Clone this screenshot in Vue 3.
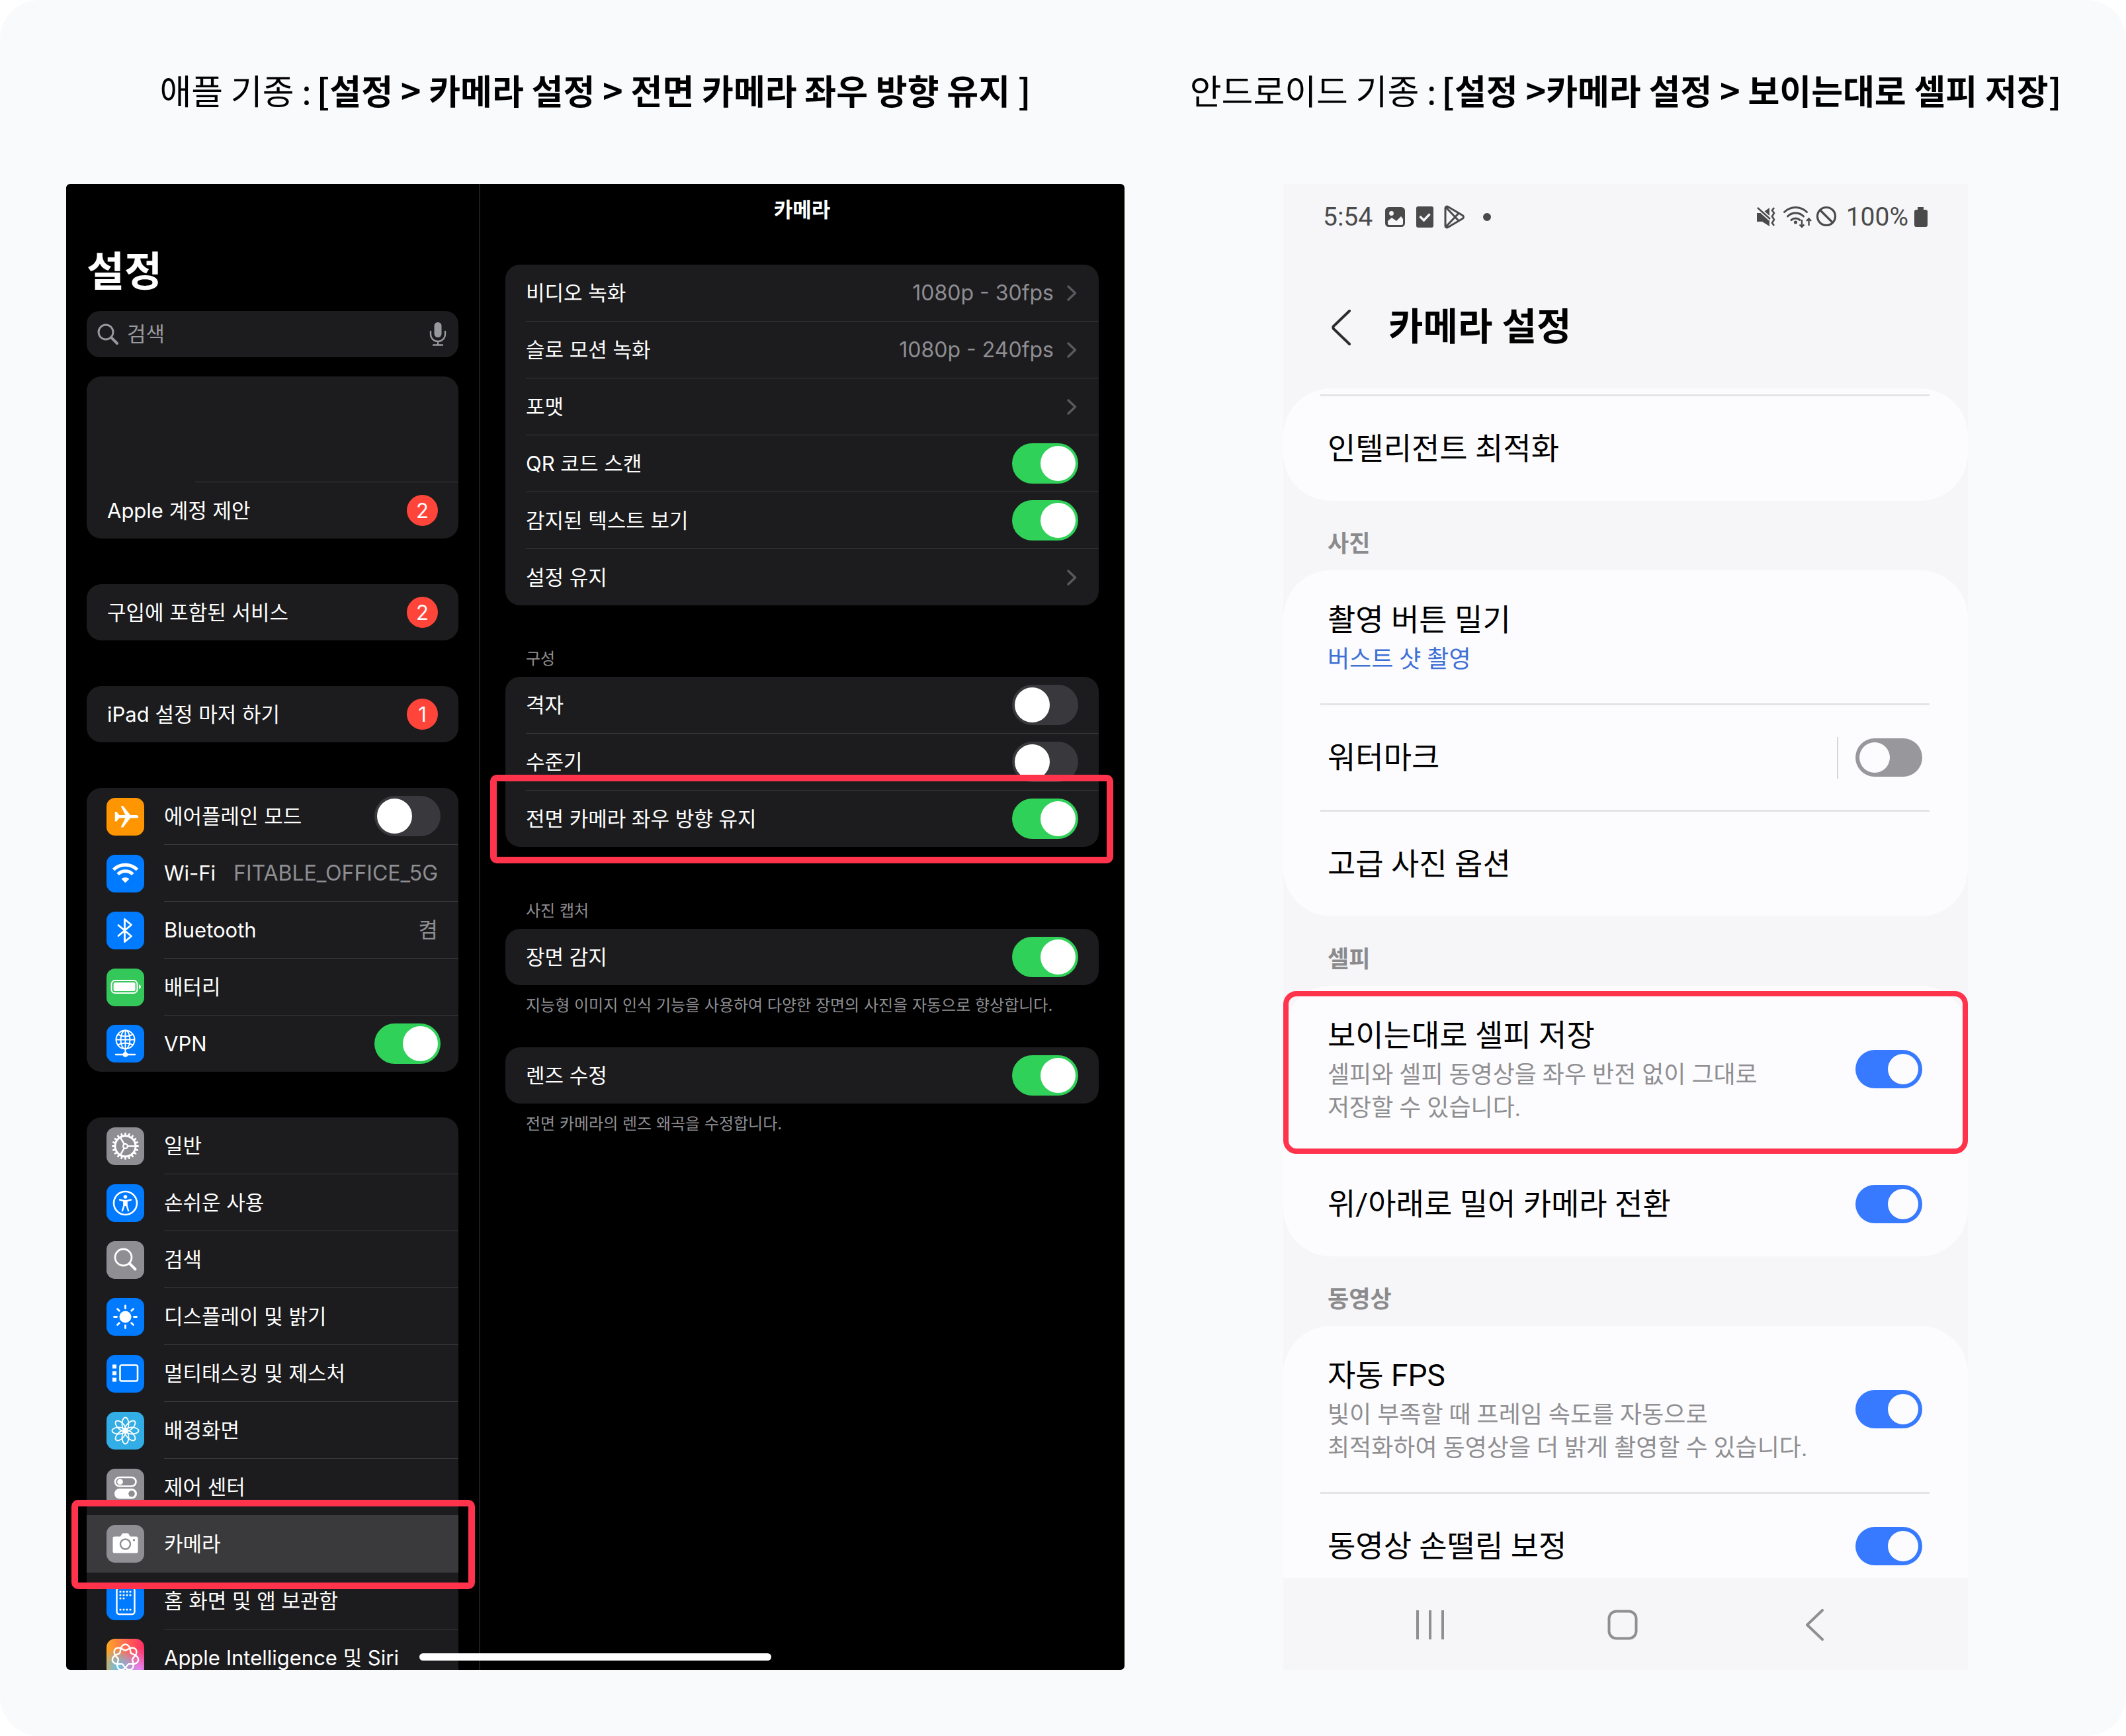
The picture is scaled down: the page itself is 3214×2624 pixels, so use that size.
<template>
  <main class="guide">
    <figure class="device">
      <figcaption class="caption">애플 기종 : <strong>[설정 &gt; 카메라 설정 &gt; 전면 카메라 좌우 방향 유지 ]</strong></figcaption>

      <div class="ipad">
        <aside class="sidebar">
          <h2 class="sidebar-title">설정</h2>

          <label class="search">
            <svg class="search-icon" viewBox="0 0 34 34" aria-hidden="true">
              <circle cx="14" cy="14" r="11" fill="none" stroke="currentColor" stroke-width="3" />
              <path d="M22 22l9 9" stroke="currentColor" stroke-width="4" stroke-linecap="round" />
            </svg>
            <input class="search-input" type="search" placeholder="검색" aria-label="검색" />
            <svg class="mic-icon" viewBox="0 0 26 36" aria-hidden="true">
              <rect x="7.5" y="0" width="11" height="23" rx="5.5" fill="currentColor" />
              <path d="M2 14v4a11 11 0 0 0 22 0v-4M13 29v5M6 34.5h14" fill="none" stroke="currentColor" stroke-width="2.4" stroke-linecap="round" />
            </svg>
          </label>

          <div class="card account">
            <div class="account-profile"></div>
            <a class="row" href="#account">
              <span>Apple 계정 제안</span>
              <span class="badge">2</span>
            </a>
          </div>

          <div v-for="notice in notices" :key="notice.label" class="card">
            <a class="row" href="#notice">
              <span>{{ notice.label }}</span>
              <span class="badge">{{ notice.count }}</span>
            </a>
          </div>

          <div class="card">
            <template v-for="item in connections" :key="item.label">
              <label v-if="item.toggle" class="row row-icon row-switch">
                <svg :class="['tile', item.tone]" viewBox="0 0 57 57" aria-hidden="true" v-html="icons[item.icon]"></svg>
                <span class="row-body">
                  <span>{{ item.label }}</span>
                  <input v-model="item.on" class="ios-switch" type="checkbox" role="switch" />
                </span>
              </label>
              <a v-else class="row row-icon" href="#connection">
                <svg :class="['tile', item.tone]" viewBox="0 0 57 57" aria-hidden="true" v-html="icons[item.icon]"></svg>
                <span class="row-body">
                  <span>{{ item.label }}</span>
                  <span class="row-value">{{ item.value }}</span>
                </span>
              </a>
            </template>
          </div>

          <nav class="card">
            <a
              v-for="item in menus"
              :key="item.label"
              :class="['row', 'row-icon', { 'row-selected': item.selected }]"
              href="#menu"
            >
              <svg :class="['tile', item.tone]" viewBox="0 0 57 57" aria-hidden="true" v-html="icons[item.icon]"></svg>
              <span class="row-body">{{ item.label }}</span>
              <span v-if="item.selected" class="marker marker-menu"></span>
            </a>
          </nav>
        </aside>

        <section class="detail">
          <h3 class="detail-title">카메라</h3>

          <div class="card">
            <template v-for="item in recording" :key="item.label">
              <label v-if="item.toggle" class="row">
                <span class="row-body">
                  <span>{{ item.label }}</span>
                  <input v-model="item.on" class="ios-switch" type="checkbox" role="switch" />
                </span>
              </label>
              <button v-else type="button" class="row">
                <span class="row-body">
                  <span>{{ item.label }}</span>
                  <span class="row-link">
                    {{ item.value }}
                    <svg class="chevron" viewBox="0 0 15 24" aria-hidden="true">
                      <path d="M2 2l10.500 10L2 22" fill="none" stroke="currentColor" stroke-width="3.400" stroke-linecap="round" stroke-linejoin="round" />
                    </svg>
                  </span>
                </span>
              </button>
            </template>
          </div>

          <h4 class="group-label">구성</h4>
          <div class="card">
            <label v-for="item in composition" :key="item.label" class="row">
              <span class="row-body">
                <span>{{ item.label }}</span>
                <input v-model="item.on" class="ios-switch" type="checkbox" role="switch" />
              </span>
              <span v-if="item.marked" class="marker marker-mirror"></span>
            </label>
          </div>

          <h4 class="group-label group-label-far">사진 캡처</h4>
          <template v-for="item in capture" :key="item.label">
            <div class="card">
              <label class="row">
                <span class="row-body">
                  <span>{{ item.label }}</span>
                  <input v-model="item.on" class="ios-switch" type="checkbox" role="switch" />
                </span>
              </label>
            </div>
            <p class="footnote">{{ item.note }}</p>
          </template>
        </section>

        <span class="home-indicator"></span>
      </div>
    </figure>

    <figure class="device">
      <figcaption class="caption">안드로이드 기종 : <strong>[설정 &gt;카메라 설정 &gt; 보이는대로 셀피 저장]</strong></figcaption>

      <div class="android">
        <header class="status">
          <span class="status-side">
            <span class="status-time">5:54</span>
            <svg class="status-icons-left" viewBox="0 0 164 36" aria-hidden="true">
              <rect x="1.5" y="4.5" width="27" height="27" rx="4" fill="#4a4a4b" stroke="#4a4a4b" stroke-width="3" />
              <circle cx="9.5" cy="12.5" r="3.4" fill="#f6f6f8" />
              <path d="M4 24l6-5 7 5 7-7 3 4v7a2 2 0 0 1-2 2H6a2 2 0 0 1-2-2z" fill="#f6f6f8" />
              <rect x="47" y="2" width="26" height="32" rx="3" fill="#4a4a4b" />
              <path d="M52.500 17l6 6 9-9.500" fill="none" stroke="#f6f6f8" stroke-width="3.4" />
              <path d="M91 4.500v27c0 2 2 3 4 2l22-13c2-1.500 2-3.500 0-5L95 2.500c-2-1-4 0-4 2zM92 3.500l19 20M92 32.500l19-20" fill="none" stroke="#4a4a4b" stroke-width="3" stroke-linejoin="round" />
              <circle cx="154" cy="18" r="6" fill="#4a4a4b" />
            </svg>
          </span>
          <span class="status-side">
            <svg class="status-icons-right" viewBox="0 0 122 36" aria-hidden="true">
              <path d="M1 12h8L20 4v28L9 25H1z" fill="#4a4a4b" />
              <path d="M1 3l20 18" stroke="#f6f6f8" stroke-width="6" />
              <path d="M2 4l19 17" stroke="#4a4a4b" stroke-width="2.4" />
              <path d="M27 4l-3 4 3 4-3 5 3 5-3 5 3 4" fill="none" stroke="#4a4a4b" stroke-width="2.600" />
              <path d="M42.500 10.500a24 24 0 0 1 34 0M47.500 17a17 17 0 0 1 24 0M53 22.500a10 10 0 0 1 13 0" fill="none" stroke="#4a4a4b" stroke-width="3" stroke-linecap="round" />
              <circle cx="59.500" cy="26" r="2.600" fill="#4a4a4b" />
              <path d="M69 22v11M65.500 29.500l3.500 3.500 3.500-3.500M79.500 31V20.500M76 24l3.500-3.500 3.500 3.500" fill="none" stroke="#4a4a4b" stroke-width="2.400" />
              <circle cx="106" cy="17" r="13.500" fill="none" stroke="#4a4a4b" stroke-width="3.200" />
              <path d="M96.500 7.500l19 19" stroke="#4a4a4b" stroke-width="3.200" />
            </svg>
            <span class="status-battery">100%</span>
            <svg class="battery-icon" viewBox="0 0 22 32" aria-hidden="true">
              <path d="M6 1h9v4h3a3 3 0 0 1 3 3v20a3 3 0 0 1-3 3H4a3 3 0 0 1-3-3V8a3 3 0 0 1 3-3h2z" fill="#4a4a4b" />
            </svg>
          </span>
        </header>

        <div class="appbar">
          <button type="button" class="back" aria-label="뒤로">
            <svg viewBox="0 0 30 56" width="30" height="56" aria-hidden="true">
              <path d="M28 3L4 26q-1.500 2 0 4l24 23" fill="none" stroke="#2b2b2d" stroke-width="4" stroke-linecap="round" />
            </svg>
          </button>
          <h2 class="appbar-title">카메라 설정</h2>
        </div>

        <div class="panels">
          <template v-for="group in groups" :key="group.id">
            <h3 v-if="group.title" class="panel-label">{{ group.title }}</h3>
            <div :class="['panel', { 'panel-cut': group.cut }]">
              <component
                :is="'on' in item ? 'label' : 'a'"
                v-for="item in group.items"
                :key="item.label"
                :href="'on' in item ? undefined : '#option'"
                :class="['option', { 'option-marked': item.marked }]"
              >
                <span class="option-text">
                  <span class="option-title">{{ item.label }}</span>
                  <span v-if="item.link" class="option-link">{{ item.link }}</span>
                  <span v-for="line in item.lines" :key="line" class="option-desc">{{ line }}</span>
                </span>
                <span v-if="item.divided" class="option-divider"></span>
                <input v-if="'on' in item" v-model="item.on" class="one-switch" type="checkbox" role="switch" />
                <span v-if="item.marked" class="marker marker-selfie"></span>
              </component>
            </div>
          </template>
        </div>

        <footer class="navbar">
          <button type="button" class="nav-button" aria-label="최근 앱">
            <svg viewBox="0 0 46 46" width="46" height="46" aria-hidden="true">
              <path d="M4 1v44M23 1v44M42 1v44" stroke="#8f8f92" stroke-width="4" />
            </svg>
          </button>
          <button type="button" class="nav-button" aria-label="홈">
            <svg viewBox="0 0 46 46" width="46" height="46" aria-hidden="true">
              <rect x="2.500" y="2.500" width="41" height="41" rx="11" fill="none" stroke="#8f8f92" stroke-width="4" />
            </svg>
          </button>
          <button type="button" class="nav-button" aria-label="뒤로 가기">
            <svg viewBox="0 0 28 48" width="28" height="48" aria-hidden="true">
              <path d="M26 2L3 24l23 22" fill="none" stroke="#8f8f92" stroke-width="4" stroke-linecap="round" stroke-linejoin="round" />
            </svg>
          </button>
        </footer>
      </div>
    </figure>
  </main>
</template>

<script setup>
import { reactive } from 'vue'

// n copies of a shape, spun around the centre of the tile
const spin = (shape, n) => Array.from({ length: n }, (_, i) =>
  `<g transform="rotate(${(360 / n) * i} 28.5 28.5)">${shape}</g>`).join('')

const dots = (xs, ys) => ys.flatMap((y) => xs.map((x) =>
  `<circle cx="${x}" cy="${y}" r="1.6" fill="#fff"/>`)).join('')

// seven interleaved lobes, the line goes round twice before it closes
const knot = Array.from({ length: 280 }, (_, i) => {
  const t = (i / 280) * Math.PI * 4
  const r = 15.5 + 4.5 * Math.cos(3.5 * t)
  return `${(28.5 + r * Math.sin(t)).toFixed(2)},${(28.5 - r * Math.cos(t)).toFixed(2)}`
}).join(' ')

const icons = {
  airplane: '<path fill="#fff" d="M12.700 21h2.600l4 5h9.200L21.600 12.200h3.600L36 26h8.500c5 0 5 4.600 0 4.600H36L25.200 44.400h-3.600l6.900-13.800h-9.200l-4 5h-2.600z"/>',
  wifi: '<g fill="none" stroke="#fff" stroke-width="5"><path d="M10.500 22.500a26 26 0 0 1 36 0"/><path d="M17.200 29.500a16 16 0 0 1 22.600 0"/></g><path fill="#fff" d="M28.500 42.500l-6-6a9 9 0 0 1 12 0z"/>',
  bluetooth: '<path fill="none" stroke="#fff" stroke-width="2.800" stroke-linejoin="round" stroke-linecap="round" d="M18 20.500L37.500 37 27.500 45.500V11.500L37.500 20 18 36.500"/>',
  battery: '<rect x="7.500" y="18" width="39" height="19" rx="5.500" fill="none" stroke="#fff" stroke-width="2"/><rect x="10.600" y="21" width="33" height="13" rx="2.500" fill="#fff"/><path fill="#fff" d="M49 24c4 1.500 4 5.500 0 7z"/>',
  vpn: '<g fill="none" stroke="#fff" stroke-width="2"><circle cx="28.500" cy="22.500" r="14"/><ellipse cx="28.500" cy="22.500" rx="7" ry="14"/><path d="M28.500 8.500v28M14.500 22.500h28M17 14.500q11.500 6 23 0M17 30.500q11.500-6 23 0M28.500 36v8"/><path stroke-width="2.600" stroke-linecap="round" d="M14 45h29"/></g><circle cx="28.500" cy="45" r="3.800" fill="#fff"/>',
  gear: `<g fill="none" stroke="#fff"><circle cx="28.500" cy="28.500" r="15.500" stroke-width="3"/><circle cx="28.500" cy="28.500" r="3.400" stroke-width="2.200"/></g>${spin('<path stroke="#fff" stroke-width="2.400" d="M32 28.500h11"/>', 3)}${spin('<path stroke="#fff" stroke-width="2.800" stroke-linecap="round" d="M45 28.500h2.600"/>', 20)}`,
  accessibility: '<circle cx="28.500" cy="28.500" r="17.500" fill="none" stroke="#fff" stroke-width="2.600"/><circle cx="28.500" cy="19" r="2.800" fill="#fff"/><path fill="none" stroke="#fff" stroke-width="2.400" stroke-linecap="round" stroke-linejoin="round" d="M20 23.500l6 1.500h5l6-1.500M26.500 25v7l-2.500 8M30.500 25v7l2.500 8"/><path fill="#fff" d="M25.500 24h6v9h-6z"/>',
  search: '<circle cx="25.500" cy="24.500" r="12.500" fill="none" stroke="#fff" stroke-width="2.800"/><path stroke="#fff" stroke-width="4" stroke-linecap="round" d="M35 34l8.500 8.500"/>',
  brightness: `<circle cx="28.500" cy="28.500" r="9" fill="#fff"/>${spin('<path stroke="#fff" stroke-width="2.800" stroke-linecap="round" d="M28.500 15.500v-4"/>', 8)}`,
  multitask: '<rect x="20.500" y="15.500" width="26.500" height="24" rx="2.500" fill="none" stroke="#fff" stroke-width="2.600"/><path fill="#fff" d="M9 14.500h6v6H9zM9 24.500h6v6H9zM9 34.500h6v6H9z"/>',
  flower: spin('<ellipse cx="28.500" cy="18.500" rx="5" ry="10" fill="none" stroke="#fff" stroke-width="1.800"/>', 8),
  control: '<rect x="13" y="13" width="31.500" height="13.500" rx="6.700" fill="none" stroke="#fff" stroke-width="2.600"/><circle cx="20.500" cy="19.800" r="4.400" fill="#fff"/><rect x="12" y="30" width="34" height="15.500" rx="7.700" fill="#fff"/><circle cx="38" cy="37.800" r="4.800" fill="#8e8e93"/>',
  camera: '<path fill="#fff" d="M12 17.500h9l2.500-4q.6-1 1.800-1h6.400q1.200 0 1.800 1l2.500 4h9q2.500 0 2.500 2.500v20q0 2.500-2.500 2.500H12q-2.500 0-2.500-2.500V20q0-2.500 2.500-2.500z"/><circle cx="28.500" cy="29" r="7.500" fill="none" stroke="#8e8e93" stroke-width="2.400"/><circle cx="41.500" cy="22.800" r="1.700" fill="#8e8e93"/>',
  home: `<rect x="15.500" y="8" width="27" height="40" rx="4" fill="none" stroke="#fff" stroke-width="2.400"/>${dots([21, 26, 31, 36], [14, 19])}${dots([21, 26], [24])}${dots([21, 26, 31, 36], [41])}`,
  siri: `<polygon points="${knot}" fill="none" stroke="#fff" stroke-width="2.400"/>`,
}

const notices = [
  { label: '구입에 포함된 서비스', count: 2 },
  { label: 'iPad 설정 마저 하기', count: 1 },
]

const connections = reactive([
  { label: '에어플레인 모드', icon: 'airplane', tone: 'orange', toggle: true, on: false },
  { label: 'Wi-Fi', icon: 'wifi', tone: 'blue', value: 'FITABLE_OFFICE_5G' },
  { label: 'Bluetooth', icon: 'bluetooth', tone: 'blue', value: '켬' },
  { label: '배터리', icon: 'battery', tone: 'green' },
  { label: 'VPN', icon: 'vpn', tone: 'blue', toggle: true, on: true },
])

const menus = [
  { label: '일반', icon: 'gear', tone: 'gray' },
  { label: '손쉬운 사용', icon: 'accessibility', tone: 'blue' },
  { label: '검색', icon: 'search', tone: 'gray' },
  { label: '디스플레이 및 밝기', icon: 'brightness', tone: 'blue' },
  { label: '멀티태스킹 및 제스처', icon: 'multitask', tone: 'blue' },
  { label: '배경화면', icon: 'flower', tone: 'cyan' },
  { label: '제어 센터', icon: 'control', tone: 'gray' },
  { label: '카메라', icon: 'camera', tone: 'gray', selected: true },
  { label: '홈 화면 및 앱 보관함', icon: 'home', tone: 'blue' },
  { label: 'Apple Intelligence 및 Siri', icon: 'siri', tone: 'rainbow' },
]

const recording = reactive([
  { label: '비디오 녹화', value: '1080p - 30fps' },
  { label: '슬로 모션 녹화', value: '1080p - 240fps' },
  { label: '포맷' },
  { label: 'QR 코드 스캔', toggle: true, on: true },
  { label: '감지된 텍스트 보기', toggle: true, on: true },
  { label: '설정 유지' },
])

const composition = reactive([
  { label: '격자', on: false },
  { label: '수준기', on: false },
  { label: '전면 카메라 좌우 방향 유지', on: true, marked: true },
])

const capture = reactive([
  { label: '장면 감지', on: true, note: '지능형 이미지 인식 기능을 사용하여 다양한 장면의 사진을 자동으로 향상합니다.' },
  { label: '렌즈 수정', on: true, note: '전면 카메라의 렌즈 왜곡을 수정합니다.' },
])

const groups = reactive([
  { id: 'smart', cut: true, items: [{ label: '인텔리전트 최적화' }] },
  {
    id: 'photo',
    title: '사진',
    items: [
      { label: '촬영 버튼 밀기', link: '버스트 샷 촬영' },
      { label: '워터마크', on: false, divided: true },
      { label: '고급 사진 옵션' },
    ],
  },
  {
    id: 'selfie',
    title: '셀피',
    items: [
      {
        label: '보이는대로 셀피 저장',
        lines: ['셀피와 셀피 동영상을 좌우 반전 없이 그대로', '저장할 수 있습니다.'],
        on: true,
        marked: true,
      },
      { label: '위/아래로 밀어 카메라 전환', on: true },
    ],
  },
  {
    id: 'video',
    title: '동영상',
    items: [
      {
        label: '자동 FPS',
        lines: ['빛이 부족할 때 프레임 속도를 자동으로', '최적화하여 동영상을 더 밝게 촬영할 수 있습니다.'],
        on: true,
      },
      { label: '동영상 손떨림 보정', on: true },
    ],
  },
])
</script>

<style>
body {
  background: #fff;
}
</style>

<style scoped>
* {
  box-sizing: border-box;
}

h2,
h3,
h4,
p,
figure {
  margin: 0;
}

a {
  color: inherit;
  text-decoration: none;
}

button {
  padding: 0;
  border: 0;
  background: none;
  color: inherit;
  font: inherit;
  text-align: left;
}

input {
  margin: 0;
  appearance: none;
}

svg {
  display: block;
  flex: none;
}

.guide {
  display: grid;
  grid-template-columns: 1600fr 1035fr;
  gap: 240px;
  min-height: 100vh;
  padding: 96px 239px 100px 100px;
  border-radius: 60px;
  background: #f9fafc;
  font-family: Inter, "Noto Sans CJK KR", sans-serif;
}

.device {
  min-width: 0;
}

.caption {
  display: flex;
  justify-content: center;
  gap: 8px;
  margin-bottom: 102px;
  color: #000;
  font-family: "Noto Sans CJK KR", sans-serif;
  font-size: 52px;
  line-height: 80px;
  white-space: nowrap;
}

/* iPad */

.ipad {
  position: relative;
  display: grid;
  grid-template-columns: minmax(0, 626fr) minmax(0, 974fr);
  aspect-ratio: 1600 / 2246;
  overflow: hidden;
  border-radius: 6px;
  background: #000;
  color: #fff;
  font-size: 31px;
  line-height: 40px;
}

.sidebar {
  display: flex;
  flex-direction: column;
  gap: 69px;
  min-height: 0;
  padding: 88px 31px 0;
  border-right: 2px solid #1e1e20;
}

.sidebar-title {
  font-size: 62px;
  font-weight: 700;
  line-height: 90px;
}

.search {
  display: flex;
  flex: none;
  align-items: center;
  height: 70px;
  margin-top: -55px;
  padding: 0 18px 0 15px;
  border-radius: 20px;
  background: #1c1c1e;
  color: #98989f;
}

.search-icon {
  width: 34px;
  height: 34px;
}

.search-input {
  flex: 1;
  min-width: 0;
  padding: 0 12px;
  border: 0;
  outline: 0;
  background: none;
  color: #fff;
  font: inherit;
}

.search-input::placeholder {
  color: #98989f;
}

.mic-icon {
  width: 26px;
  height: 36px;
}

.card {
  flex: none;
  border-radius: 22px;
  background: #1c1c1e;
}

.account {
  margin-top: -40px;
}

.account-profile {
  height: 160px;
  margin-left: 164px;
  border-bottom: 1px solid #39393c;
}

.row {
  position: relative;
  display: flex;
  align-items: center;
  justify-content: space-between;
  width: 100%;
  height: 86px;
  padding-left: 31px;
}

.row:last-child {
  height: 85px;
}

.badge {
  width: 47px;
  height: 47px;
  margin-right: 31px;
  border-radius: 50%;
  background: #ff453a;
  line-height: 47px;
  text-align: center;
}

.row-icon {
  gap: 30px;
  padding-left: 30px;
}

.row-body {
  display: flex;
  flex: 1;
  align-items: center;
  justify-content: space-between;
  height: 100%;
  padding-right: 31px;
  border-bottom: 1px solid #39393c;
  white-space: nowrap;
}

.row:last-child .row-body,
.row-selected .row-body {
  border-bottom: 0;
}

.row-switch .row-body {
  padding-right: 27px;
}

.row-value,
.row-link {
  color: #8e8e93;
  font-size: 32px;
}

.row-link {
  display: flex;
  align-items: center;
  gap: 20px;
}

.row-selected {
  margin-top: -1px;
  height: 87px;
  background: #3a3a3c;
}

.chevron {
  width: 15px;
  height: 24px;
  margin-right: 2px;
  color: #5a5a5e;
}

.tile {
  width: 57px;
  height: 57px;
  border-radius: 13px;
}

.orange { background: #ff9500; }
.blue { background: #007aff; }
.green { background: #34c759; }
.gray { background: #8e8e93; }
.cyan { background: #32ade6; }

.rainbow {
  background:
    radial-gradient(circle at 30% 75%, #62c4ee, transparent 50%),
    radial-gradient(circle at 85% 85%, #dc8cff, transparent 50%),
    linear-gradient(90deg, #ffa722, #ff6b52 50%, #ff2d66);
}

.ios-switch {
  display: flex;
  flex: none;
  align-items: center;
  width: 100px;
  height: 61px;
  padding: 4px;
  border-radius: 31px;
  background: #39393d;
}

.ios-switch::before {
  content: "";
  width: 53px;
  height: 53px;
  border-radius: 50%;
  background: #fff;
}

.ios-switch:checked {
  justify-content: flex-end;
  background: #30d158;
}

.detail {
  padding: 0 39px 0 38px;
}

.detail-title {
  padding: 19px 0 63px;
  font-size: 31px;
  font-weight: 600;
  line-height: 40px;
  text-align: center;
}

.group-label {
  padding: 64px 31px 10px;
  color: #8e8e93;
  font-size: 24px;
  font-weight: 400;
  line-height: 34px;
}

.group-label-far {
  padding-top: 80px;
}

.footnote {
  margin-bottom: 46px;
  padding: 14px 31px 0;
  color: #8e8e93;
  font-size: 24px;
  line-height: 34px;
}

.home-indicator {
  position: absolute;
  bottom: 14px;
  left: 50%;
  width: 532px;
  height: 11px;
  margin-left: -266px;
  border-radius: 6px;
  background: #fff;
}

.marker {
  position: absolute;
  z-index: 1;
  border: 10px solid #ff334b;
  border-radius: 10px;
  pointer-events: none;
}

.marker-menu {
  inset: -23px -25px -25px -23px;
}

.marker-mirror {
  inset: -24px -22px -25px -23px;
}

/* Android */

.android {
  display: flex;
  flex-direction: column;
  aspect-ratio: 1035 / 2246;
  overflow: hidden;
  background: #f6f6f8;
  color: #000;
  font-family: Roboto, "Noto Sans CJK KR", sans-serif;
}

.status {
  display: flex;
  justify-content: space-between;
  padding: 25px 60px;
  color: #4a4a4b;
  font-size: 39px;
  line-height: 50px;
}

.status-side {
  display: flex;
  align-items: center;
}

.status-icons-left {
  width: 164px;
  height: 36px;
  margin-left: 19px;
}

.status-icons-right {
  width: 122px;
  height: 36px;
  margin-right: 14px;
}

.battery-icon {
  width: 22px;
  height: 32px;
  margin-left: 8px;
}

.appbar {
  display: flex;
  align-items: center;
  gap: 57px;
  height: 209px;
  padding: 25px 72px 0;
}

.appbar-title {
  font-size: 57px;
  font-weight: 700;
  line-height: 80px;
}

.panels {
  flex: 1;
  min-height: 0;
  overflow: hidden;
}

.panel {
  padding: 0 58px 0 56px;
  border-radius: 72px;
  background: #fcfcfe;
}

/* the list scrolls on under the navigation bar */
.panel:last-child {
  border-bottom-right-radius: 0;
  border-bottom-left-radius: 0;
}

.panel-cut {
  padding-top: 9px;
}

.panel-label {
  padding: 41px 67px 14px;
  color: #8b8b8e;
  font-size: 35px;
  font-weight: 700;
  line-height: 50px;
}

.option {
  position: relative;
  display: flex;
  align-items: center;
  min-height: 158px;
  padding: 41px 11px;
}

.panel-cut .option,
.option + .option {
  min-height: 161px;
  border-top: 3px solid #e4e4e6;
}

.option-marked + .option {
  min-height: 158px;
  border-top: 0;
}

.option-text {
  display: flex;
  flex: 1;
  flex-direction: column;
  white-space: nowrap;
}

.option-title {
  font-size: 46px;
  line-height: 69px;
}

.option-link,
.option-desc {
  font-size: 36px;
  line-height: 50px;
}

.option-link {
  color: #3e70d6;
}

.option-desc {
  color: #8f8f92;
}

.option-divider {
  width: 2px;
  height: 63px;
  margin-right: 26px;
  background: #d6d6d9;
}

.one-switch {
  display: flex;
  flex: none;
  align-items: center;
  width: 101px;
  height: 58px;
  padding: 6px;
  border-radius: 29px;
  background: #98989c;
}

.one-switch::before {
  content: "";
  width: 46px;
  height: 46px;
  border-radius: 50%;
  background: #fcfcfe;
}

.one-switch:checked {
  justify-content: flex-end;
  background: #387aff;
}

.marker-selfie {
  inset: 8px -58px -3px -56px;
  border-width: 8px;
  border-radius: 20px;
}

.navbar {
  display: flex;
  flex: none;
  align-items: center;
  justify-content: space-between;
  height: 139px;
  padding: 2px 209px 0 199px;
}

.nav-button {
  display: flex;
  justify-content: center;
  width: 46px;
}
</style>
